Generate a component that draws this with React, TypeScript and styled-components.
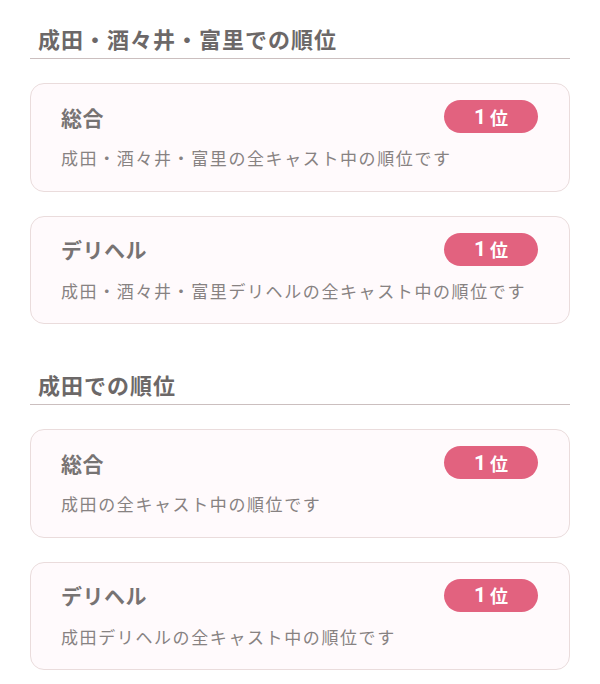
import React from "react";
import styled, { createGlobalStyle } from "styled-components";

const GlobalStyle = createGlobalStyle`
  body {
    margin: 0;
    background: #ffffff;
    font-family: "Noto Sans CJK JP", "Noto Sans", sans-serif;
  }
`;

const Page = styled.div`
  padding: 23px 30px 15px;
  border-bottom: 1px solid #ececec;
`;

const Section = styled.section`
  & + & {
    margin-top: 45px;
  }
`;

const SectionTitle = styled.h2`
  margin: 0 0 24px;
  padding: 0 0 5px 8px;
  font-size: 22px;
  line-height: 30px;
  letter-spacing: 1px;
  font-weight: 700;
  color: #6c6868;
  border-bottom: 1.5px solid #cbbfbf;
`;

const CardList = styled.div`
  display: flex;
  flex-direction: column;
  gap: 24px;
`;

const Card = styled.div`
  background: #fffafc;
  border: 1.5px solid #eadcdc;
  border-radius: 14px;
  padding: 16px 31px 19.5px 30px;
  display: flex;
  flex-direction: column;
  gap: 12px;
`;

const CardHead = styled.div`
  display: flex;
  align-items: center;
  justify-content: space-between;
`;

const CardTitle = styled.div`
  font-size: 21px;
  font-weight: 700;
  color: #777373;
  letter-spacing: 0.5px;
`;

const Badge = styled.div`
  width: 94px;
  height: 33px;
  border-radius: 17px;
  background: #e2627f;
  color: #ffffff;
  display: flex;
  align-items: center;
  justify-content: center;
  gap: 4px;
  font-weight: 700;
`;

const BadgeNum = styled.span`
  font-family: Roboto, "Noto Sans", sans-serif;
  font-size: 21px;
  font-weight: 700;
`;

const BadgeUnit = styled.span`
  font-size: 18px;
`;

const Desc = styled.div`
  font-size: 17px;
  line-height: 26px;
  letter-spacing: 1.6px;
  color: #878282;
`;

interface Rank {
  title: string;
  rank: number;
  desc: string;
}

interface Group {
  heading: string;
  ranks: Rank[];
}

const groups: Group[] = [
  {
    heading: "成田・酒々井・富里での順位",
    ranks: [
      { title: "総合", rank: 1, desc: "成田・酒々井・富里の全キャスト中の順位です" },
      { title: "デリヘル", rank: 1, desc: "成田・酒々井・富里デリヘルの全キャスト中の順位です" },
    ],
  },
  {
    heading: "成田での順位",
    ranks: [
      { title: "総合", rank: 1, desc: "成田の全キャスト中の順位です" },
      { title: "デリヘル", rank: 1, desc: "成田デリヘルの全キャスト中の順位です" },
    ],
  },
];

const App = () => {
  return (
    <>
      <GlobalStyle />
      <Page>
        {groups.map((g) => (
          <Section key={g.heading}>
            <SectionTitle>{g.heading}</SectionTitle>
            <CardList>
              {g.ranks.map((r) => (
                <Card key={r.title}>
                  <CardHead>
                    <CardTitle>{r.title}</CardTitle>
                    <Badge>
                      <BadgeNum>{r.rank}</BadgeNum>
                      <BadgeUnit>位</BadgeUnit>
                    </Badge>
                  </CardHead>
                  <Desc>{r.desc}</Desc>
                </Card>
              ))}
            </CardList>
          </Section>
        ))}
      </Page>
    </>
  );
};

export default App;
